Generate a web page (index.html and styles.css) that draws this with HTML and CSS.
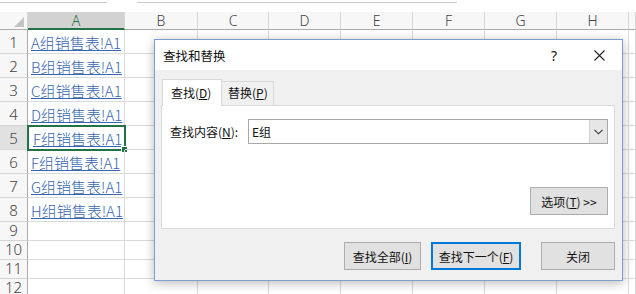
FILE: index.html
```html
<!DOCTYPE html>
<html>
<head>
<meta charset="utf-8">
<link rel="stylesheet" href="styles.css">
</head>
<body>
<div class="topstrip"><div class="box b1"></div><div class="box b2"></div></div>
<div class="sheet">
  <div class="hdr corner"><span class="tri"></span></div>
  <div class="hdr col sel">A</div>
  <div class="hdr col">B</div>
  <div class="hdr col">C</div>
  <div class="hdr col">D</div>
  <div class="hdr col">E</div>
  <div class="hdr col">F</div>
  <div class="hdr col">G</div>
  <div class="hdr col">H</div>
  <div class="hdr col"></div>

  <div class="rh big">1</div><div class="cell big"><span class="link">A组销售表!A1</span></div><div class="cell big"></div><div class="cell big"></div><div class="cell big"></div><div class="cell big"></div><div class="cell big"></div><div class="cell big"></div><div class="cell big"></div><div class="cell big"></div>
  <div class="rh big">2</div><div class="cell big"><span class="link">B组销售表!A1</span></div><div class="cell big"></div><div class="cell big"></div><div class="cell big"></div><div class="cell big"></div><div class="cell big"></div><div class="cell big"></div><div class="cell big"></div><div class="cell big"></div>
  <div class="rh big">3</div><div class="cell big"><span class="link">C组销售表!A1</span></div><div class="cell big"></div><div class="cell big"></div><div class="cell big"></div><div class="cell big"></div><div class="cell big"></div><div class="cell big"></div><div class="cell big"></div><div class="cell big"></div>
  <div class="rh big">4</div><div class="cell big"><span class="link">D组销售表!A1</span></div><div class="cell big"></div><div class="cell big"></div><div class="cell big"></div><div class="cell big"></div><div class="cell big"></div><div class="cell big"></div><div class="cell big"></div><div class="cell big"></div>
  <div class="rh big rsel">5</div><div class="cell big active"><span class="link">F组销售表!A1</span><span class="handle"></span></div><div class="cell big"></div><div class="cell big"></div><div class="cell big"></div><div class="cell big"></div><div class="cell big"></div><div class="cell big"></div><div class="cell big"></div><div class="cell big"></div>
  <div class="rh big">6</div><div class="cell big"><span class="link">F组销售表!A1</span></div><div class="cell big"></div><div class="cell big"></div><div class="cell big"></div><div class="cell big"></div><div class="cell big"></div><div class="cell big"></div><div class="cell big"></div><div class="cell big"></div>
  <div class="rh big">7</div><div class="cell big"><span class="link">G组销售表!A1</span></div><div class="cell big"></div><div class="cell big"></div><div class="cell big"></div><div class="cell big"></div><div class="cell big"></div><div class="cell big"></div><div class="cell big"></div><div class="cell big"></div>
  <div class="rh big">8</div><div class="cell big"><span class="link">H组销售表!A1</span></div><div class="cell big"></div><div class="cell big"></div><div class="cell big"></div><div class="cell big"></div><div class="cell big"></div><div class="cell big"></div><div class="cell big"></div><div class="cell big"></div>
  <div class="rh">9</div><div class="cell"></div><div class="cell"></div><div class="cell"></div><div class="cell"></div><div class="cell"></div><div class="cell"></div><div class="cell"></div><div class="cell"></div><div class="cell"></div>
  <div class="rh">10</div><div class="cell"></div><div class="cell"></div><div class="cell"></div><div class="cell"></div><div class="cell"></div><div class="cell"></div><div class="cell"></div><div class="cell"></div><div class="cell"></div>
  <div class="rh">11</div><div class="cell"></div><div class="cell"></div><div class="cell"></div><div class="cell"></div><div class="cell"></div><div class="cell"></div><div class="cell"></div><div class="cell"></div><div class="cell"></div>
  <div class="rh">12</div><div class="cell"></div><div class="cell"></div><div class="cell"></div><div class="cell"></div><div class="cell"></div><div class="cell"></div><div class="cell"></div><div class="cell"></div><div class="cell"></div>
</div>

<div class="dialog">
  <div class="titlebar">
    <span class="title">查找和替换</span>
    <span class="help">?</span>
    <svg class="close" width="11" height="11" viewBox="0 0 11 11"><path d="M0.5 0.5 L10.5 10.5 M10.5 0.5 L0.5 10.5" stroke="#222" stroke-width="1.1"/></svg>
  </div>
  <div class="body">
    <div class="tabs">
      <div class="tab on">查找(<u>D</u>)</div>
      <div class="tab">替换(<u>P</u>)</div>
    </div>
    <div class="panel">
      <div class="findrow">
        <span class="label">查找内容(<u>N</u>):</span>
        <div class="combo">
          <span class="val">E组</span>
          <span class="dd"><svg width="9" height="6" viewBox="0 0 9 6"><path d="M0.5 0.8 L4.5 4.8 L8.5 0.8" fill="none" stroke="#333" stroke-width="1.1"/></svg></span>
        </div>
      </div>
      <div class="optrow"><button class="btn opt">选项(<u>T</u>) &gt;&gt;</button></div>
    </div>
    <div class="btnrow">
      <button class="btn b-all">查找全部(<u>I</u>)</button>
      <button class="btn b-next">查找下一个(<u>F</u>)</button>
      <button class="btn b-close">关闭</button>
    </div>
  </div>
</div>
</body>
</html>
```
FILE: styles.css
```css
html, body { margin: 0; padding: 0; background: #fff; }
body { width: 636px; height: 294px; overflow: hidden; position: relative; font-family: "Noto Sans CJK SC", "Noto Sans", sans-serif; }

.topstrip { height: 12px; background: #fff; display: flex; gap: 30px; }
.topstrip .box { height: 2px; border-bottom: 1px solid #c9c9c9; }
.topstrip .b1 { width: 107px; }
.topstrip .b2 { width: 320px; }

.sheet {
  display: grid;
  grid-template-columns: 28px 97px 73px 71px 72px 72px 72px 72px 72px 7px;
  grid-template-rows: 18px repeat(8, 24px) repeat(4, 19px);
  overflow: hidden;
}
.hdr {
  background: #f7f7f7;
  border-right: 1px solid #d6d6d6;
  border-bottom: 1px solid #ababab;
  color: #444;
  font-size: 14px;
  line-height: 17px;
  text-align: center;
  font-family: "Noto Sans", "Noto Sans CJK SC", sans-serif;
  font-weight: 300;
  box-sizing: border-box;
}
.corner { position: relative; }
.tri {
  position: absolute; right: 3px; bottom: 2px;
  width: 0; height: 0;
  border-left: 10px solid transparent;
  border-bottom: 10px solid #c4c4c4;
}
.hdr.sel { background: #d2d2d2; color: #217346; border-bottom: 2px solid #217346; }
.rh {
  background: #f7f7f7;
  border-right: 1px solid #ababab;
  border-bottom: 1px solid #d6d6d6;
  color: #444;
  font-size: 15px;
  text-align: center;
  display: flex; align-items: flex-end; justify-content: center;
  line-height: 19px;
  box-sizing: border-box;
  font-family: "Noto Sans", sans-serif;
  font-weight: 300;
}
.rh.big { line-height: 21px; }
.rh.rsel { background: #e1e1e1; }
.cell {
  border-right: 1px solid #dadada;
  border-bottom: 1px solid #dadada;
  box-sizing: border-box;
  position: relative;
  display: flex; align-items: flex-end; justify-content: flex-start;
  padding-left: 3px;
}
.link {
  color: #3866b0;
  text-decoration: underline;
  text-underline-offset: 1px;
  font-size: 15px;
  line-height: 20px;
  white-space: nowrap;
  font-family: "Noto Sans CJK SC", sans-serif;
  font-weight: 300;
}
.cell.active { border: 2px solid #217346; margin: -1px 0 0 -1px; width: 99px; height: 26px; padding-left: 4px; }
.handle {
  position: absolute; right: -4px; bottom: -4px;
  width: 5px; height: 5px; background: #217346; border: 1px solid #fff;
}

.dialog {
  position: absolute; left: 154px; top: 39px;
  width: 469px; height: 242px;
  box-sizing: border-box;
  border: 1px solid #7d9dd2;
  background: #f0f0f0;
  box-shadow: 0 2px 10px rgba(0,0,0,0.28);
  display: flex; flex-direction: column;
  font-size: 12px; color: #111;
}
.titlebar {
  height: 30px; background: #fff;
  display: flex; align-items: center;
  padding: 0 17px 0 8px;
}
.title { flex: 1; font-size: 12.5px; padding-top: 1px; }
.help { font-size: 14px; margin-right: 37px; font-family: "Noto Sans", sans-serif; }
.close { display: block; }
.body { flex: 1; padding: 9px 7px 0 6px; display: flex; flex-direction: column; }
.tabs { display: flex; align-items: flex-end; height: 26px; margin-left: 1px; position: relative; z-index: 1; }
.tab {
  height: 24px; box-sizing: border-box;
  border: 1px solid #d9d9d9; border-bottom: none;
  padding: 0 7px; line-height: 22px;
  background: #f0f0f0; font-size: 12px;
}
.tab.on { height: 27px; background: #fff; line-height: 25px; width: 60px; padding: 0 0 0 8px; margin-bottom: -1px; }
.tab:not(.on) { border-left: none; width: 52px; padding: 0 0 0 6px; }
.panel {
  background: #fff; border: 1px solid #d9d9d9;
  height: 124px; box-sizing: border-box;
  padding: 13px 6px 0 8px;
  display: flex; flex-direction: column;
}
.findrow { display: flex; align-items: center; }
.label { width: 78px; }
.combo {
  flex: 1; height: 25px; box-sizing: border-box;
  border: 1px solid #a8a8a8; background: #fff;
  display: flex; align-items: center;
}
.val { flex: 1; padding-left: 3px; font-size: 12px; }
.dd {
  width: 17px; height: 23px; background: #e6e6e6; border-left: 1px solid #cfcfcf;
  display: flex; align-items: center; justify-content: center;
}
.optrow { display: flex; justify-content: flex-end; margin-top: 43px; }
.btn {
  font-family: "Noto Sans CJK SC", sans-serif; font-size: 12px; color: #111;
  background: #e1e1e1; border: 1px solid #adadad;
  height: 28px; padding: 0; box-sizing: border-box;
}
.opt { width: 78px; }
.btnrow { display: flex; justify-content: flex-end; margin-top: 13px; gap: 10px; }
.b-all { width: 77px; }
.b-next { width: 90px; border: 2px solid #0078d7; }
.b-close { width: 74px; margin-left: 10px; }
```
